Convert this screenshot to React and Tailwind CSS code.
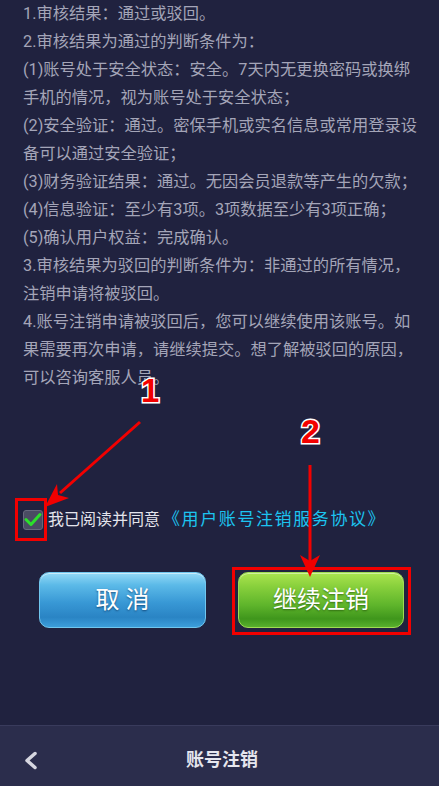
import React from 'react';

const lines = [
  '1.审核结果：通过或驳回。',
  '2.审核结果为通过的判断条件为：',
  '(1)账号处于安全状态：安全。7天内无更换密码或换绑',
  '手机的情况，视为账号处于安全状态；',
  '(2)安全验证：通过。密保手机或实名信息或常用登录设',
  '备可以通过安全验证；',
  '(3)财务验证结果：通过。无因会员退款等产生的欠款；',
  '(4)信息验证：至少有3项。3项数据至少有3项正确；',
  '(5)确认用户权益：完成确认。',
  '3.审核结果为驳回的判断条件为：非通过的所有情况，',
  '注销申请将被驳回。',
  '4.账号注销申请被驳回后，您可以继续使用该账号。如',
  '果需要再次申请，请继续提交。想了解被驳回的原因，',
  '可以咨询客服人员。',
];

function Annotations() {
  return (
    <svg className="absolute inset-0 pointer-events-none" width="439" height="786" viewBox="0 0 439 786">
      {/* box round the checkbox */}
      <rect x="16.5" y="499.5" width="29" height="40" fill="none" stroke="#f20000" strokeWidth="3" />
      {/* arrow 1 */}
      <line x1="140" y1="422" x2="60" y2="493" stroke="#f20000" strokeWidth="3" />
      <polygon points="45,507 69,498 58,495 57,484" fill="#f20000" />
      <text
        x="141" y="402" fontSize="33" fontWeight="700"
        fontFamily="'Liberation Sans', Arial, sans-serif"
        fill="#f20000" stroke="#ffffff" strokeWidth="3" paintOrder="stroke"
      >1</text>
      {/* arrow 2 */}
      <line x1="310" y1="465" x2="310" y2="562" stroke="#f20000" strokeWidth="3" />
      <polygon points="310,577 300,555 310,561 320,555" fill="#f20000" />
      <text
        x="301" y="443" fontSize="34" fontWeight="700"
        fontFamily="'Liberation Sans', Arial, sans-serif"
        fill="#f20000" stroke="#ffffff" strokeWidth="3" paintOrder="stroke"
      >2</text>
      {/* box round the continue button */}
      <rect x="233.5" y="568.5" width="176" height="65" fill="none" stroke="#f20000" strokeWidth="3" />
    </svg>
  );
}

export default function App() {
  return (
    <div className="relative w-[439px] h-[786px] overflow-hidden bg-[#20223f] flex flex-col font-['Roboto','Noto_Sans_CJK_SC',sans-serif]">
      <div className="flex-1">
        <div className="pl-[23px] text-[16.25px] leading-[28px] text-[#a4a5b8]">
          {lines.map((line, i) => (
            <div key={i} className="h-[28px] whitespace-nowrap">{line}</div>
          ))}
        </div>

        <div className="mt-[118px] h-[20px] pl-[23px] flex items-center">
          <div className="w-[20px] h-[20px] rounded-[3px] bg-[#4a4c63] border border-[#67697e] flex items-center justify-center">
            <svg width="18" height="18" viewBox="0 0 18 18">
              <polyline points="2,8.5 7,13.5 16,3.5" fill="none" stroke="#2be02b" strokeWidth="3" strokeLinecap="round" strokeLinejoin="round" />
            </svg>
          </div>
          <span className="ml-[5px] text-[16px] text-[#e4e4ec] whitespace-nowrap">我已阅读并同意</span>
          <span className="ml-[3px] text-[17px] tracking-[1.6px] text-[#1cc4f0] whitespace-nowrap">《用户账号注销服务协议》</span>
        </div>

        <div className="mt-[42px] pl-[39px] flex gap-[32px]">
          <button className="w-[167px] h-[56px] rounded-[10px] border border-[#70c6ee] bg-[linear-gradient(180deg,#94daf7_0%,#5cbae8_22%,#3898d5_55%,#2a84c4_82%,#3c9edb_100%)] shadow-[inset_0_1px_0_rgba(255,255,255,0.5)] text-[24px] text-white [text-shadow:0_1px_2px_rgba(0,30,70,0.6)]">
            取 消
          </button>
          <button className="w-[166px] h-[56px] rounded-[10px] border border-[#9fdc52] bg-[linear-gradient(180deg,#abe44e_0%,#88d03c_25%,#5eb42b_60%,#3f961c_85%,#58b02d_100%)] shadow-[inset_0_1px_0_rgba(255,255,255,0.45)] text-[24px] text-white [text-shadow:0_1px_2px_rgba(20,60,0,0.6)]">
            继续注销
          </button>
        </div>
      </div>

      <div className="relative h-[61px] border-t border-[#393b5c] bg-[#2b2d4c] pt-[6px] flex items-center justify-center">
        <svg className="absolute left-[23px] top-[25px]" width="15" height="19" viewBox="0 0 15 19">
          <polyline points="12,2.5 4,9.5 12,16.5" fill="none" stroke="#d6d6e0" strokeWidth="3.5" strokeLinecap="round" strokeLinejoin="round" />
        </svg>
        <span className="ml-[5px] text-[18px] font-bold text-[#e6e6ee]">账号注销</span>
      </div>

      <Annotations />
    </div>
  );
}
